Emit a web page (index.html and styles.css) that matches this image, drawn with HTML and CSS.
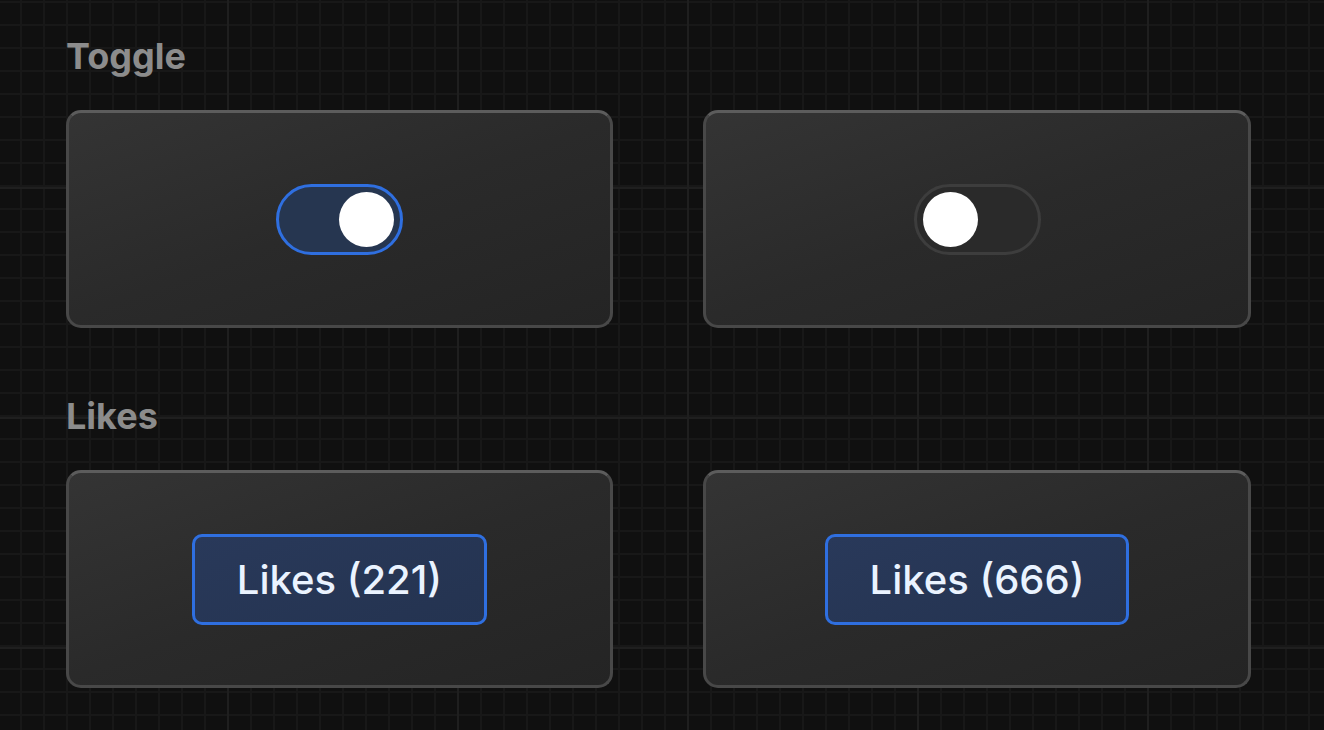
FILE: index.html
```html
<!DOCTYPE html>
<html lang="en">
<head>
<meta charset="utf-8">
<title>Components</title>
<link rel="stylesheet" href="styles.css">
</head>
<body>
<main class="page">
  <section class="section">
    <h2 class="section-title">Toggle</h2>
    <div class="card-grid">
      <div class="card">
        <button class="toggle toggle-on" aria-pressed="true"><span class="knob"></span></button>
      </div>
      <div class="card">
        <button class="toggle toggle-off" aria-pressed="false"><span class="knob"></span></button>
      </div>
    </div>
  </section>
  <section class="section">
    <h2 class="section-title">Likes</h2>
    <div class="card-grid">
      <div class="card">
        <button class="likes">Likes (221)</button>
      </div>
      <div class="card">
        <button class="likes">Likes (666)</button>
      </div>
    </div>
  </section>
</main>
</body>
</html>
```

FILE: styles.css
```css
html, body {
  margin: 0;
  padding: 0;
}

body {
  min-height: 730px;
  background-color: #101010;
  background-image:
    linear-gradient(to right, #1f1f1f 0 2px, transparent 2px),
    linear-gradient(to bottom, #1f1f1f 0 2px, transparent 2px),
    linear-gradient(to right, #181818 0 2px, transparent 2px),
    linear-gradient(to bottom, #181818 0 2px, transparent 2px);
  background-size: 230px 230px, 230px 230px, 23px 23px, 23px 23px;
  background-position: 227px 0, 0 187px, 20px 0, 0 1px;
  font-family: Inter, "Liberation Sans", sans-serif;
}

.page {
  padding: 34px 0 0 66px;
  display: flex;
  flex-direction: column;
  gap: 66px;
}

.section-title {
  margin: 0 0 32px 0;
  font-size: 36px;
  line-height: 44px;
  font-weight: 700;
  color: #8c8c8c;
  letter-spacing: 0;
}

.card-grid {
  display: grid;
  grid-template-columns: 547px 548px;
  column-gap: 90px;
}

.card {
  box-sizing: border-box;
  height: 218px;
  border-radius: 15px;
  border: 3px solid #484848;
  border-top-color: #5c5c5c;
  background: linear-gradient(160deg, #343434 0%, #2a2a2a 50%, #242424 100%);
  display: flex;
  align-items: center;
  justify-content: center;
}

.toggle {
  box-sizing: border-box;
  width: 127px;
  height: 71px;
  border-radius: 36px;
  border: 3px solid #3d3d3d;
  background: #2a2a2a;
  padding: 0 6px;
  display: flex;
  align-items: center;
  cursor: pointer;
}

.toggle-on {
  border-color: #2f6fe0;
  background: #263650;
  justify-content: flex-end;
}

.toggle-off {
  justify-content: flex-start;
}

.knob {
  width: 55px;
  height: 55px;
  border-radius: 50%;
  background: #ffffff;
  display: block;
}

.likes {
  box-sizing: border-box;
  height: 91px;
  padding: 0 42px;
  border: 3px solid #2f6fe0;
  border-radius: 10px;
  background: linear-gradient(160deg, #29395a 0%, #243350 100%);
  color: #eaf3ff;
  font-family: Inter, "Liberation Sans", sans-serif;
  font-size: 40px;
  font-weight: 500;
  cursor: pointer;
}
```
